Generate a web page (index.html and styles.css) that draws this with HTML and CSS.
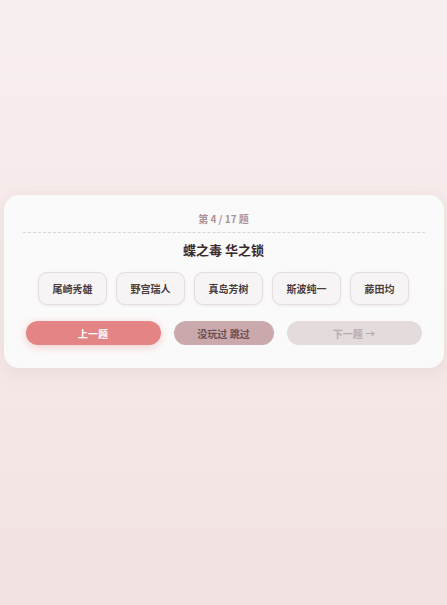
FILE: index.html
```html
<!DOCTYPE html>
<html lang="zh">
<head>
<meta charset="utf-8">
<title>Quiz</title>
<link rel="stylesheet" href="styles.css">
</head>
<body>
<main class="page">
  <section class="card">
    <div class="progress">第 4 / 17 题</div>
    <h1 class="title">蝶之毒 华之锁</h1>
    <div class="options">
      <button class="option">尾崎秀雄</button>
      <button class="option">野宫瑞人</button>
      <button class="option">真岛芳树</button>
      <button class="option">斯波纯一</button>
      <button class="option">藤田均</button>
    </div>
    <div class="actions">
      <button class="btn btn-prev">上一题</button>
      <button class="btn btn-skip">没玩过 跳过</button>
      <button class="btn btn-next">下一题 →</button>
    </div>
  </section>
</main>
</body>
</html>
```
FILE: styles.css
```css
html, body {
  margin: 0;
  padding: 0;
}
body {
  width: 447px;
  height: 605px;
  overflow: hidden;
  background: linear-gradient(180deg, #f7efee 0%, #f4e8e7 60%, #f2e2e1 100%);
  font-family: "Noto Sans CJK SC", "Noto Sans", sans-serif;
}
.page {
  padding-top: 195px;
  display: flex;
  justify-content: center;
}
.card {
  width: 396px;
  padding: 0 22px 23px;
  background: #fbfafa;
  border-radius: 15px;
  box-shadow: 0 4px 18px rgba(180, 140, 140, 0.16);
}
.progress {
  margin: 0 -3px;
  padding: 17px 0 6px;
  line-height: 14px;
  font-size: 10px;
  font-weight: 700;
  color: #ad9196;
  text-align: center;
  border-bottom: 1px dashed #ddd3d4;
}
.title {
  margin: 8px 0 0;
  line-height: 18px;
  font-size: 13px;
  font-weight: 700;
  color: #3b2b2d;
  text-align: center;
}
.options {
  margin-top: 13px;
  display: flex;
  justify-content: center;
  gap: 9px;
}
.option {
  height: 33px;
  padding: 0 13.5px;
  font-family: inherit;
  font-size: 10px;
  font-weight: 700;
  color: #4a3b3c;
  background: #f6f4f4;
  border: 1px solid #e4dddd;
  border-radius: 9px;
  box-shadow: 0 1px 3px rgba(160, 130, 130, 0.12);
}
.actions {
  margin-top: 16px;
  display: flex;
  gap: 13px;
}
.btn {
  height: 24px;
  border: none;
  border-radius: 12px;
  font-family: inherit;
  font-size: 10px;
  font-weight: 700;
}
.btn-prev {
  width: 135px;
  background: #e48484;
  color: #ffffff;
  box-shadow: 0 2px 8px rgba(228, 120, 120, 0.35);
}
.btn-skip {
  width: 100px;
  background: #caa9ac;
  color: #6b4f53;
}
.btn-next {
  width: 135px;
  background: #e4dbdc;
  color: #b8acad;
}
```
